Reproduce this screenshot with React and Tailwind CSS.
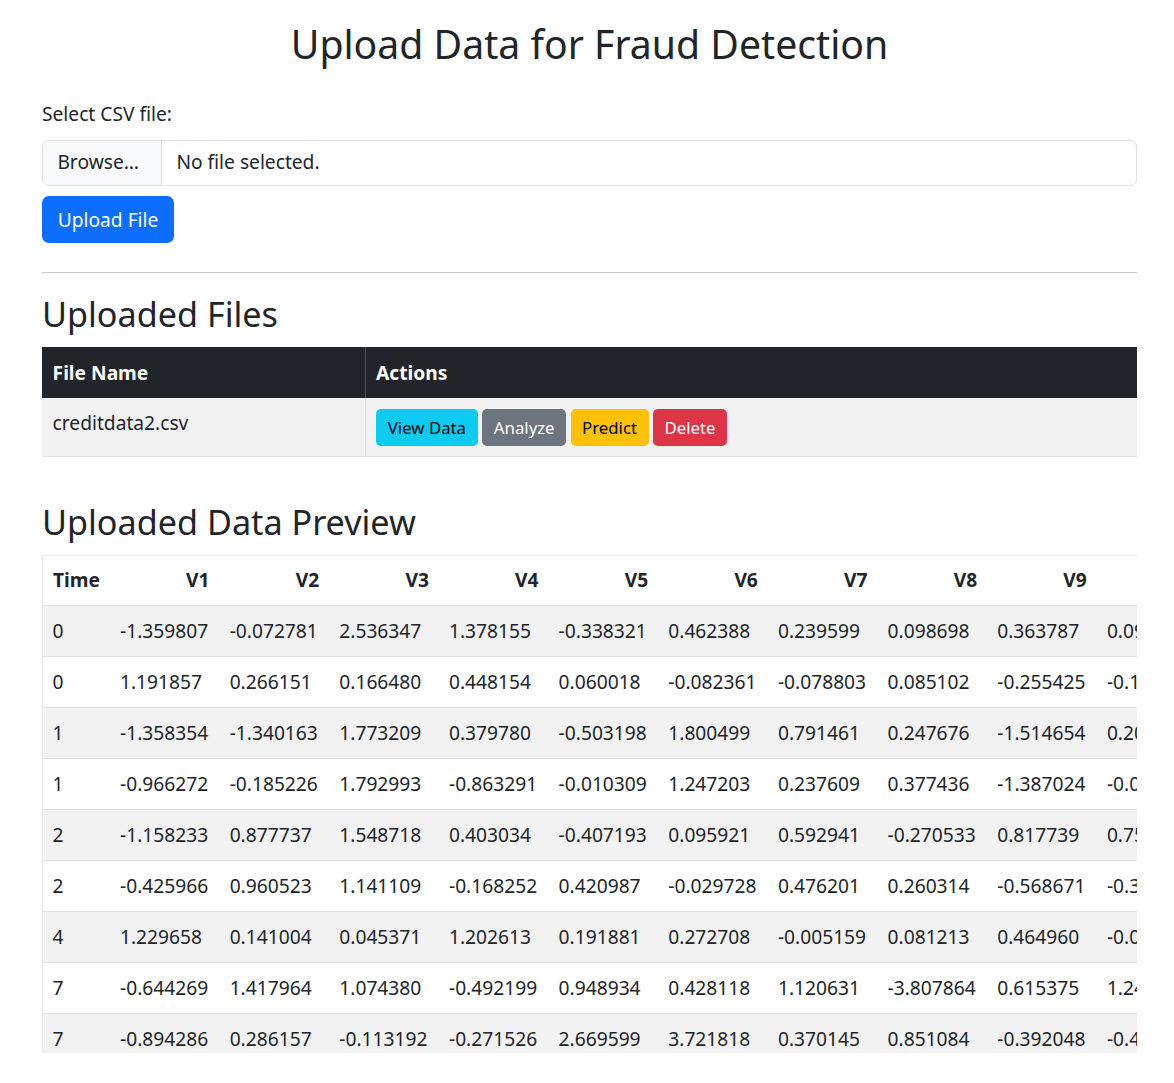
import React from 'react';

const columns = ['Time', 'V1', 'V2', 'V3', 'V4', 'V5', 'V6', 'V7', 'V8', 'V9', 'V10', 'V11'];

const rows = [
  ['0', '-1.359807', '-0.072781', '2.536347', '1.378155', '-0.338321', '0.462388', '0.239599', '0.098698', '0.363787', '0.090794', '-0.551600'],
  ['0', '1.191857', '0.266151', '0.166480', '0.448154', '0.060018', '-0.082361', '-0.078803', '0.085102', '-0.255425', '-0.166974', '1.612727'],
  ['1', '-1.358354', '-1.340163', '1.773209', '0.379780', '-0.503198', '1.800499', '0.791461', '0.247676', '-1.514654', '0.207643', '0.624501'],
  ['1', '-0.966272', '-0.185226', '1.792993', '-0.863291', '-0.010309', '1.247203', '0.237609', '0.377436', '-1.387024', '-0.054952', '-0.226487'],
  ['2', '-1.158233', '0.877737', '1.548718', '0.403034', '-0.407193', '0.095921', '0.592941', '-0.270533', '0.817739', '0.753074', '-0.822843'],
  ['2', '-0.425966', '0.960523', '1.141109', '-0.168252', '0.420987', '-0.029728', '0.476201', '0.260314', '-0.568671', '-0.371407', '1.341262'],
  ['4', '1.229658', '0.141004', '0.045371', '1.202613', '0.191881', '0.272708', '-0.005159', '0.081213', '0.464960', '-0.099254', '-1.416907'],
  ['7', '-0.644269', '1.417964', '1.074380', '-0.492199', '0.948934', '0.428118', '1.120631', '-3.807864', '0.615375', '1.249376', '-0.619468'],
  ['7', '-0.894286', '0.286157', '-0.113192', '-0.271526', '2.669599', '3.721818', '0.370145', '0.851084', '-0.392048', '-0.410430', '-0.705117'],
];

const cellWidth = (i) => (i === 0 ? 'w-[67.4px]' : 'w-[109.67px]');

const App = () => {
  return (
    <div className="min-h-screen bg-white text-[#212529] font-['Noto_Sans',sans-serif]">
      <div className="pl-[42px] pr-[37px] pb-8">
        <h2 className="mt-[20px] text-center text-[39.2px] leading-[1.2] font-normal">
          Upload Data for Fraud Detection
        </h2>

        {/* upload form */}
        <label className="block mt-[33px] text-[19.2px] leading-[28.8px]">Select CSV file:</label>
        <div className="mt-[11px] flex h-[46px] border border-[#dee2e6] rounded-[7px] overflow-hidden text-[19.2px]">
          <div className="w-[119px] bg-[#f8f9fa] border-r border-[#dee2e6] flex items-center px-[14.4px]">
            Browse…
          </div>
          <div className="flex items-center px-[14.4px]">No file selected.</div>
        </div>
        <button className="mt-[10px] h-[47px] w-[132px] rounded-[7px] bg-[#0d6efd] text-white text-[19.2px] pt-[2px]">
          Upload File
        </button>

        <hr className="mt-[29px] border-t border-[#c8c9ca]" />

        {/* uploaded files */}
        <h3 className="mt-[20px] text-[34.2px] leading-[1.2] font-normal">Uploaded Files</h3>
        <div className="mt-[13px] text-[19.2px]">
          <div className="flex h-[51px] bg-[#212529] text-white font-bold">
            <div className="w-[324px] flex items-center px-[10.6px] pt-[2px] border-r border-[#4b5056]">File Name</div>
            <div className="flex-1 flex items-center px-[10px] pt-[2px]">Actions</div>
          </div>
          <div className="flex h-[59px] bg-[#f2f2f2] border-b border-[#dee2e6]">
            <div className="w-[324px] px-[10.6px] pt-[11px] leading-[28.8px] border-r border-[#dee2e6]">
              creditdata2.csv
            </div>
            <div className="flex-1 px-[10px] pt-[11px] flex gap-[4.5px] items-start text-[16.8px]">
              <button className="h-[37px] px-[11.8px] rounded-[5px] bg-[#0dcaf0] text-black">View Data</button>
              <button className="h-[37px] px-[11.5px] rounded-[5px] bg-[#6c757d] text-white">Analyze</button>
              <button className="h-[37px] px-[11.5px] rounded-[5px] bg-[#ffc107] text-black">Predict</button>
              <button className="h-[37px] px-[11.5px] rounded-[5px] bg-[#dc3545] text-white">Delete</button>
            </div>
          </div>
        </div>

        {/* data preview */}
        <h3 className="mt-[44px] text-[34.2px] leading-[1.2] font-normal">Uploaded Data Preview</h3>
        <div className="mt-[13px] h-[498px] overflow-hidden border-t border-l border-[#e9ecef] text-[19.2px]">
          <div className="w-max">
            <div className="flex h-[50px] border-b border-[#dee2e6] font-bold">
              {columns.map((c, i) => (
                <div key={c} className={`${cellWidth(i)} shrink-0 flex items-center justify-end px-[10.5px]`}>
                  {c}
                </div>
              ))}
            </div>
            {rows.map((r, ri) => (
              <div
                key={ri}
                className={`flex h-[51px] border-b border-[#dee2e6] ${ri % 2 === 0 ? 'bg-[#f2f2f2]' : 'bg-white'}`}
              >
                {r.map((v, i) => (
                  <div key={i} className={`${cellWidth(i)} shrink-0 flex items-center px-[9.6px] pt-[2px] whitespace-nowrap`}>
                    {v}
                  </div>
                ))}
              </div>
            ))}
          </div>
        </div>
      </div>
    </div>
  );
};

export default App;
